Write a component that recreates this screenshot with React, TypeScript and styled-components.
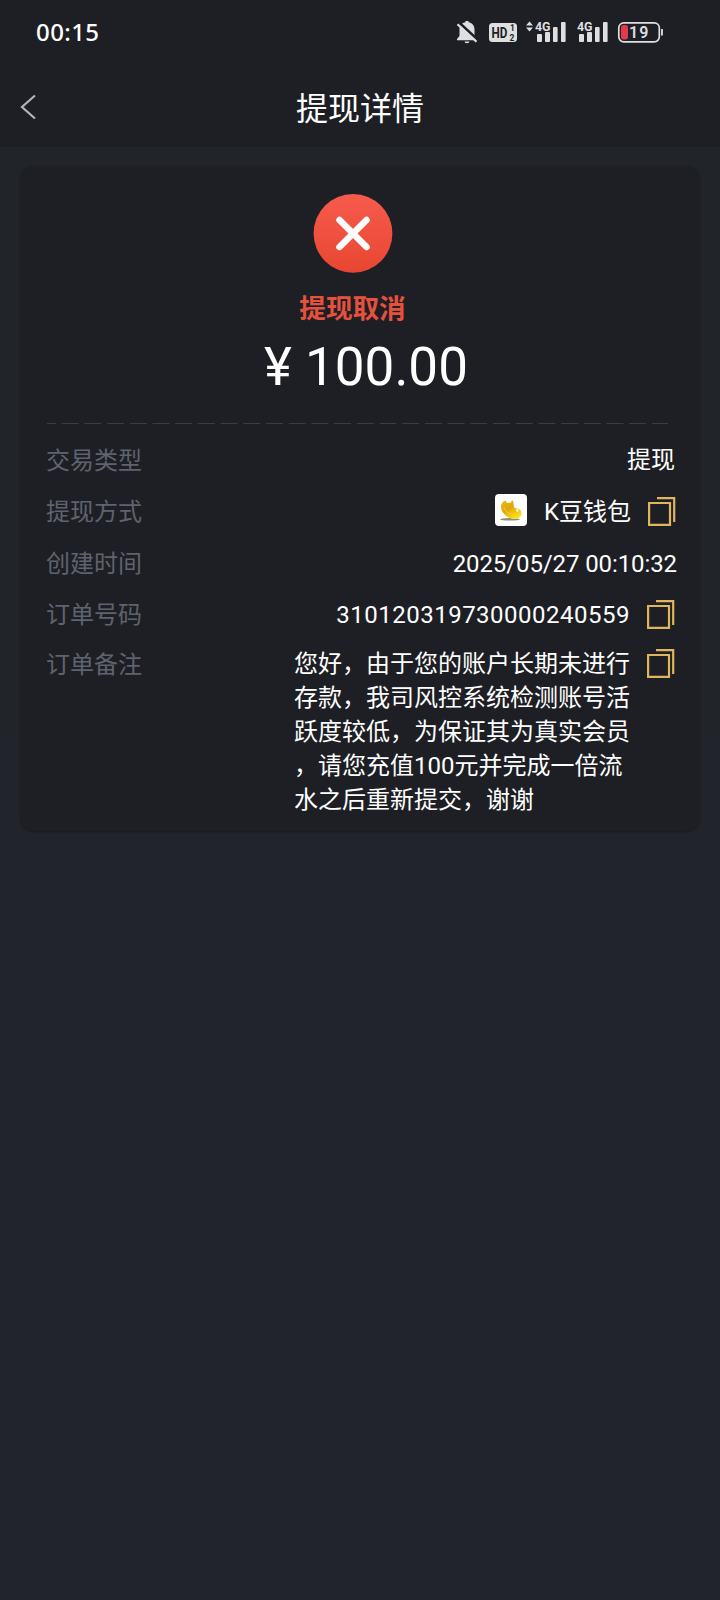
import React from "react";
import styled, { createGlobalStyle } from "styled-components";

const Global = createGlobalStyle`
  html, body { margin: 0; background: #21242c; }
  * { box-sizing: border-box; }
`;

const Screen = styled.div`
  width: 720px;
  height: 1600px;
  display: flex;
  flex-direction: column;
  background: linear-gradient(#212429 0, #212429 700px, #21242c 900px);
  color: #fff;
  font-family: Roboto, "Noto Sans CJK SC", sans-serif;
  overflow: hidden;
`;

const StatusBar = styled.header`
  height: 64px;
  padding: 0 56px 0 36px;
  display: flex;
  align-items: center;
  justify-content: space-between;
  background: #1e1f24;
`;

const Clock = styled.time`
  font: 500 24px/28px "Noto Sans", sans-serif;
  letter-spacing: 0.4px;
`;

const StatusIcons = styled.svg`
  display: block;
  width: 212px;
  height: 32px;
`;

const TitleBar = styled.nav`
  height: 83px;
  padding: 0 18px;
  display: grid;
  grid-template-columns: 24px 1fr 24px;
  align-items: center;
  background: #1e1f24;
`;

const BackButton = styled.button`
  border: 0;
  padding: 0;
  background: none;
  height: 28px;
  margin-top: 3px;
`;

const Title = styled.h1`
  margin: 7px 0 0;
  text-align: center;
  font-size: 32px;
  line-height: 44px;
  font-weight: 400;
`;

const Card = styled.main`
  margin: 19px 20px 0;
  height: 665px;
  padding: 27px 22px 0 26px;
  border-radius: 14px;
  background: #1e1f24;
  box-shadow: 0 1px 2px #191a1e;
`;

const Summary = styled.section`
  display: flex;
  flex-direction: column;
  align-items: center;
  height: 230px;
  padding-right: 19px;
`;

const Status = styled.div`
  margin-top: 17px;
  color: #e4523e;
  font-size: 26.6px;
  line-height: 38px;
  font-weight: 700;
`;

const Amount = styled.div`
  margin: 7px 0 0 27px;
  font-size: 53px;
  line-height: 64px;
  white-space: pre;
`;

const Divider = styled.svg`
  display: block;
  width: 622px;
  height: 2px;
`;

const Row = styled.div<{ $h: number; $top?: boolean }>`
  height: ${(p) => p.$h}px;
  padding-top: ${(p) => (p.$top ? 16 : 0)}px;
  display: flex;
  justify-content: space-between;
  align-items: ${(p) => (p.$top ? "flex-start" : "center")};
  font-size: 24px;
  line-height: 34px;
`;

const Label = styled.span<{ $top?: number }>`
  margin-top: ${(p) => p.$top ?? 0}px;
  color: #5e636e;
`;

const Value = styled.span<{ $right?: number; $spacing?: number }>`
  display: flex;
  align-items: center;
  margin-right: ${(p) => p.$right ?? 0}px;
  letter-spacing: ${(p) => p.$spacing ?? 0}px;
`;

const Remark = styled.p`
  margin: 0 17px 0 auto;
  width: 336px;
  line-break: anywhere;
`;

const Wallet = styled.svg`
  width: 32px;
  height: 32px;
  margin: 0 17px 3px 0;
`;

const CopyButton = styled.button<{ $gap?: number; $right?: number; $top?: number }>`
  border: 0;
  padding: 0;
  background: none;
  width: 28px;
  height: 29px;
  margin: ${(p) => p.$top ?? -2}px ${(p) => p.$right ?? 3}px 0 ${(p) => p.$gap ?? 17}px;
  svg { display: block; }
`;

const CopyIcon = () => (
  <svg width="28" height="29" viewBox="0 0 28 29" fill="none" stroke="#dfb65e" strokeWidth="2.200">
    <path d="M1.100 6H22V27.800H1.100ZM9 1.100H26.200V25" />
  </svg>
);

const bars = (x: number) => (
  <g fill="#dedfe1">
    <rect x={x} y="18" width="5" height="8" rx="1" />
    <rect x={x + 8} y="16" width="5" height="10" rx="1" />
    <rect x={x + 16} y="11" width="4.6" height="15" rx="1" />
    <rect x={x + 24} y="6" width="4.6" height="20" rx="1" />
  </g>
);

export default function App() {
  return (
    <Screen>
      <Global />
      <StatusBar>
        <Clock>00:15</Clock>
        <StatusIcons viewBox="452 16 212 32">
          <g transform="translate(0 16)">
            <path d="M459.500 20V13.500c0-4 2.500-6.500 6-7.200V5h3v1.300c3.500.7 6 3.200 6 7.200V20l2.500 3v1.300H457V23zM464.500 25.500h5a2.500 1.800 0 0 1-5 0z" fill="#dedfe1" />
            <path d="M458.500 6L478.500 24.500" stroke="#1e1f24" strokeWidth="2.600" />
            <path d="M457.500 8.200L476.500 25.800" stroke="#dedfe1" strokeWidth="2.200" />
            <rect x="489" y="7" width="28" height="19" rx="3.500" fill="#dedfe1" />
            {bars(537)}
            {bars(579)}
            <path d="M526 9.500l3.500-4 3.500 4zM526 11.500l3.500 4 3.500-4z" fill="#dedfe1" />
            <rect x="618.800" y="6.800" width="40.500" height="19" rx="5" fill="none" stroke="#dedfe1" strokeWidth="1.700" />
            <rect x="621" y="9" width="7" height="14.500" rx="2.500" fill="#e2394b" />
            <path d="M662 13v6.500" stroke="#dedfe1" strokeWidth="1.800" />
            <g fontFamily="Roboto, sans-serif" fontWeight="700" fill="#dedfe1">
              <text transform="translate(491.500 22) scale(0.780 1)" fontSize="15" fill="#1e1f24">HD</text>
              <text x="510" y="15" fontSize="8.500" fill="#1e1f24">1</text>
              <text x="509.500" y="25" fontSize="8.500" fill="#1e1f24">2</text>
              <text x="535" y="14.500" fontSize="13.500" stroke="#1e1f24" strokeWidth="2" paintOrder="stroke" textLength="15.500" lengthAdjust="spacingAndGlyphs">4G</text>
              <text x="577" y="14.500" fontSize="13.500" stroke="#1e1f24" strokeWidth="2" paintOrder="stroke" textLength="15.500" lengthAdjust="spacingAndGlyphs">4G</text>
              <text x="629" y="22" fontSize="16" fontWeight="600" textLength="19.500">19</text>
            </g>
          </g>
        </StatusIcons>
      </StatusBar>
      <TitleBar>
        <BackButton aria-label="返回">
          <svg width="24" height="28" viewBox="0 0 24 28" fill="none" stroke="#b3b5bd" strokeWidth="2.200">
            <path d="M17 2.500L4 14l13 11.500" />
          </svg>
        </BackButton>
        <Title>提现详情</Title>
      </TitleBar>
      <Card>
        <Summary>
          <svg width="80" height="80" viewBox="0 0 80 80">
            <defs>
              <linearGradient id="red" x1="0" y1="0" x2="0" y2="1">
                <stop stopColor="#f75b4d" />
                <stop offset="1" stopColor="#e84632" />
              </linearGradient>
            </defs>
            <circle cx="40" cy="40.400" r="39.400" fill="url(#red)" />
            <path d="M26.500 27L53.500 54M53.500 27L26.500 54" stroke="#fff" strokeWidth="6.500" strokeLinecap="round" />
          </svg>
          <Status>提现取消</Status>
          <Amount>¥ 100.00</Amount>
        </Summary>
        <Divider>
          <path d="M1 0.500H622" stroke="#383c46" strokeWidth="1" strokeDasharray="17 5.700" strokeDashoffset="8" />
        </Divider>
        <Row $h={70}>
          <Label $top={1}>交易类型</Label>
          <Value $right={3}>提现</Value>
        </Row>
        <Row $h={33}>
          <Label>提现方式</Label>
          <Value>
            <Wallet viewBox="0 0 32 32">
              <defs>
                <linearGradient id="gold" x1="0" y1="0" x2="0.600" y2="1">
                  <stop stopColor="#f0b91a" />
                  <stop offset="0.500" stopColor="#dfa60a" />
                  <stop offset="1" stopColor="#f9e21e" />
                </linearGradient>
              </defs>
              <rect width="32" height="32" rx="4" fill="#fff" />
              <ellipse cx="15" cy="25.300" rx="10" ry="1.200" fill="#8e8a78" />
              <path d="M6 12.500c0-3 2-5 4.500-6l1.500 2.500 4-.5 1-2.500c2 1.500 1.500 5 2 7 .5 1.500 2 1.500 3.500 1.500 3 .5 4.500 3.500 4 6-.8 3-4 4.500-7.500 4.500C12.500 25 6 18.500 6 12.500z" fill="url(#gold)" />
              <path d="M9 14c1.500 3.500 4.500 5.500 8 6" fill="none" stroke="#f5d040" strokeWidth="1" strokeLinecap="round" />
              <circle cx="22.500" cy="16.500" r="1.400" fill="#fbf0a0" />
            </Wallet>
            K豆钱包
            <CopyButton aria-label="复制" $right={2} $top={0}><CopyIcon /></CopyButton>
          </Value>
        </Row>
        <Row $h={71}>
          <Label>创建时间</Label>
          <Value $right={1} $spacing={-0.1}>2025/05/27 00:10:32</Value>
        </Row>
        <Row $h={32}>
          <Label>订单号码</Label>
          <Value $spacing={0.5}>
            310120319730000240559
            <CopyButton aria-label="复制"><CopyIcon /></CopyButton>
          </Value>
        </Row>
        <Row $h={190} $top>
          <Label $top={1}>订单备注</Label>
          <Remark>您好，由于您的账户长期未进行存款，我司风控系统检测账号活跃度较低，为保证其为真实会员，请您充值100元并完成一倍流水之后重新提交，谢谢</Remark>
          <CopyButton aria-label="复制" $gap={0} $top={2}><CopyIcon /></CopyButton>
        </Row>
      </Card>
    </Screen>
  );
}
